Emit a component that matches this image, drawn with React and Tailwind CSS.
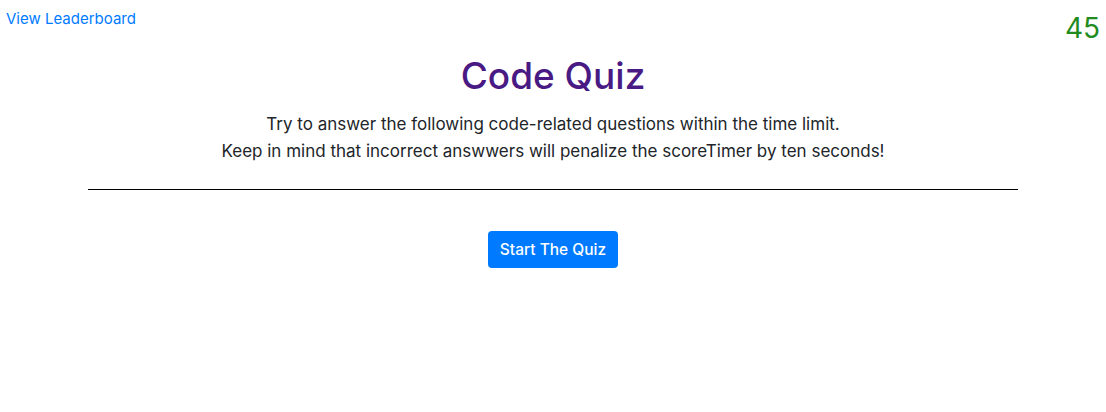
export default function App() {
  return (
    <div className="min-h-[412px] bg-white" style={{ fontFamily: "Inter, 'Noto Sans', sans-serif" }}>
      <div className="flex justify-between items-start">
        <a href="#" className="ml-[6px] mt-[7px] text-[15px] leading-6 text-[#007bff]">View Leaderboard</a>
        <div className="mr-[6px] mt-[10px] text-[28px] leading-[36px] text-[#228b1d]">45</div>
      </div>
      <div className="mx-auto w-[930px] mt-[8px] text-center">
        <h1 className="text-[37px] leading-[44px] font-medium text-[#4a1a84]">Code Quiz</h1>
        <p className="mt-[13px] text-[17px] leading-[27px] text-[#212529]">
          Try to answer the following code-related questions within the time limit.
          <br />
          Keep in mind that incorrect answwers will penalize the scoreTimer by ten seconds!
        </p>
        <hr className="mt-[24px] border-0 border-t border-black" />
        <button className="mt-[41px] rounded-[4px] bg-[#007bff] px-3 py-[6px] text-[15.5px] leading-[25px] font-medium text-white">
          Start The Quiz
        </button>
      </div>
    </div>
  );
}
